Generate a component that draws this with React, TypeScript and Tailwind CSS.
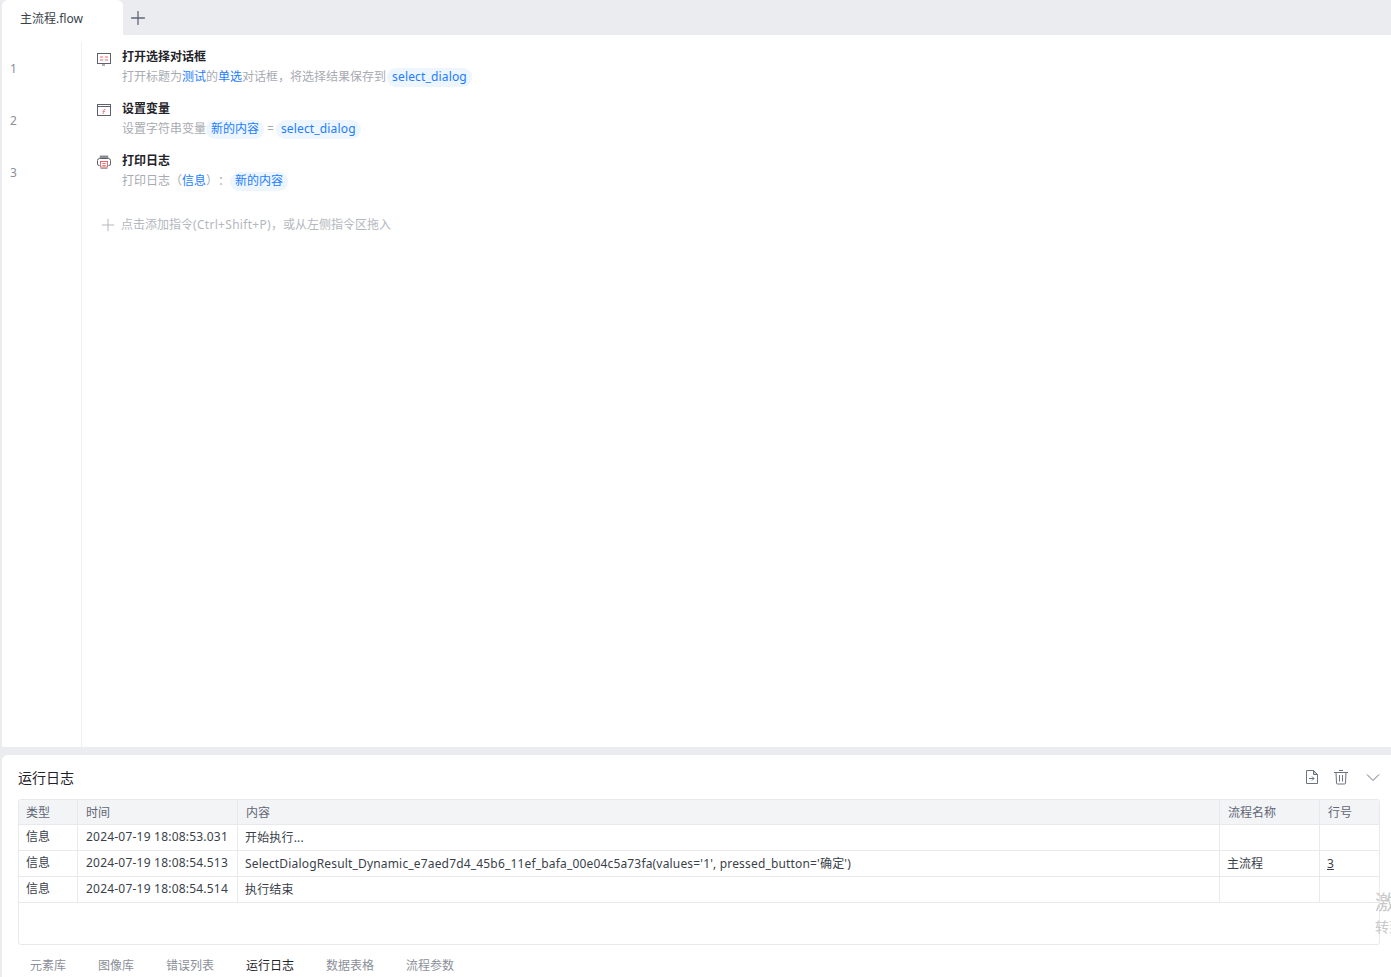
import { Plus } from "lucide-react";

const font = "font-['Noto_Sans','Noto_Sans_CJK_SC',sans-serif]";

function Pill({ children, latin }: { children: string; latin?: boolean }) {
  return (
    <span
      className={`inline-flex h-[19px] items-center rounded-full bg-[#edf5ff] px-[5px] text-[#1a7dff] ${
        latin ? "tracking-[0.16px]" : ""
      }`}
    >
      {children}
    </span>
  );
}

function Link({ children }: { children: string }) {
  return <span className="text-[#1a7dff]">{children}</span>;
}

function DialogIcon() {
  return (
    <svg width="16" height="16" viewBox="0 0 16 16" fill="none">
      <rect x="1.5" y="3.5" width="13" height="10" stroke="#5f636e" />
      <path d="M6 15h3" stroke="#5f636e" />
      <path d="M4 7h3M4 10h3M9 7h3M9 10h3" stroke="#f0686c" />
    </svg>
  );
}

function VarIcon() {
  return (
    <svg width="16" height="16" viewBox="0 0 16 16" fill="none">
      <rect x="1.5" y="2.5" width="13" height="11" stroke="#5f636e" />
      <path d="M1.5 4.500h13" stroke="#5f636e" />
      <path d="M9.500 7.500h-1.500l-1 4.500M6.500 9.500h2.500" stroke="#f58a8d" />
    </svg>
  );
}

function PrintIcon() {
  return (
    <svg width="16" height="16" viewBox="0 0 16 16" fill="none">
      <path d="M4 1.500h8l.5 2.500h-9z" fill="#8a8d96" />
      <path d="M3.500 11.500H3A1.500 1.500 0 0 1 1.500 10V6.500A2 2 0 0 1 3.500 4.500h9a2 2 0 0 1 2 2V10a1.500 1.500 0 0 1-1.500 1.500h-.5" stroke="#5f636e" />
      <rect x="4.500" y="7.500" width="7" height="5.500" stroke="#f0686c" />
      <path d="M6.500 9.500h3M6.500 11.500h3" stroke="#f0686c" />
      <path d="M4.500 13.500h7V15h-7z" fill="#a0a3ab" />
    </svg>
  );
}

function Step({
  icon,
  title,
  children,
}: {
  icon: React.ReactNode;
  title: string;
  children: React.ReactNode;
}) {
  return (
    <div className="flex h-[52px] items-start">
      <div className="pt-[10px] pl-[14px] w-[40px] shrink-0">{icon}</div>
      <div className="pt-[7px]">
        <div className="text-[12px] leading-[20px] font-bold text-[#1f2329]">{title}</div>
        <div className="flex items-center h-[20px] text-[12px] text-[#a8abb2] whitespace-nowrap">
          {children}
        </div>
      </div>
    </div>
  );
}

const rows = [
  { time: "2024-07-19 18:08:53.031", text: "开始执行...", flow: "", line: "" },
  {
    time: "2024-07-19 18:08:54.513",
    text: "SelectDialogResult_Dynamic_e7aed7d4_45b6_11ef_bafa_00e04c5a73fa(values='1', pressed_button='确定')",
    flow: "主流程",
    line: "3",
  },
  { time: "2024-07-19 18:08:54.514", text: "执行结束", flow: "", line: "" },
];

const tabs = ["元素库", "图像库", "错误列表", "运行日志", "数据表格", "流程参数"];

export default function App() {
  return (
    <div className={`${font} [text-spacing-trim:space-all] relative h-[977px] overflow-hidden bg-[#ebecf0] flex flex-col`}>
      {/* tab bar */}
      <div className="flex h-[35px] shrink-0 pl-[2px]">
        <div className="w-[121px] bg-white rounded-t-[6px] pl-[18px] text-[12px] leading-[37px] text-[#3a3f4a]">
          主流程.flow
        </div>
        <div className="pl-[4px] pt-[7px] text-[#5f6675]">
          <Plus size={22} strokeWidth={1.4} />
        </div>
      </div>

      {/* editor */}
      <div className="flex h-[712px] shrink-0 ml-[2px] bg-white">
        <div className="w-[80px] shrink-0 pt-[4px] border-r border-[#eef0f3] mt-[7px]">
          {["1", "2", "3"].map((n) => (
            <div key={n} className="h-[52px] pl-[8px] pt-[13px] text-[12px] leading-[20px] text-[#8b8f99]">
              {n}
            </div>
          ))}
        </div>
        <div className="flex-1 pt-[5px]">
          <Step icon={<DialogIcon />} title="打开选择对话框">
            打开标题为<Link>测试</Link>的<Link>单选</Link>对话框，将选择结果保存到
            <span className="ml-[1px]"><Pill latin>select_dialog</Pill></span>
          </Step>
          <Step icon={<VarIcon />} title="设置变量">
            设置字符串变量
            <Pill>新的内容</Pill>
            <span className="ml-[3px] mr-[2px]">=</span>
            <Pill latin>select_dialog</Pill>
          </Step>
          <Step icon={<PrintIcon />} title="打印日志">
            打印日志（<Link>信息</Link>）：
            <Pill>新的内容</Pill>
          </Step>
          <div className="flex items-center pl-[16px] mt-[19px] h-[20px] text-[12px] text-[#b4b7be]">
            <Plus size={20} strokeWidth={1.2} className="mr-[3px]" />
            <span>
              点击添加指令<span className="tracking-[0.3px]">(Ctrl+Shift+P)</span>，或从左侧指令区拖入
            </span>
          </div>
        </div>
      </div>

      {/* bottom panel */}
      <div className="mt-[8px] ml-[2px] flex-1 bg-white rounded-tl-[6px] px-[16px]">
        <div className="flex h-[44px] items-center justify-between">
          <span className="text-[14px] text-[#1f2329]">运行日志</span>
          <div className="flex items-center text-[#6b7280] -mr-[6px]">
            <svg width="16" height="16" viewBox="0 0 16 16" fill="none" stroke="currentColor">
              <path d="M2.500 1.500h7l4 4v9h-11z" />
              <path d="M9.500 1.500l4 4h-4z" fill="currentColor" fillOpacity="0.4" />
              <path d="M5 9.500h5M8 7.500l2 2-2 2" />
            </svg>
            <svg width="16" height="16" viewBox="0 0 16 16" fill="none" stroke="currentColor" className="ml-[13px]">
              <path d="M1 3.500h14M6 1.500h4M3 3.500l.5 10.500a1 1 0 0 0 1 1h7a1 1 0 0 0 1-1l.5-10.500M6.500 6v6.500M9.500 6v6.500" />
            </svg>
            <svg width="16" height="16" viewBox="0 0 16 16" fill="none" stroke="currentColor" className="ml-[16px]">
              <path d="M2 5.500l6 6 6-6" />
            </svg>
          </div>
        </div>

        <div className="w-[1362px] h-[146px] border border-[#e8e9ed] rounded-[3px] text-[12px] text-[#3a3f4a]">
          <div className="flex h-[25px] bg-[#f3f4f6] border-b border-[#e8e9ed] text-[#5f6675] rounded-t-[3px]">
            <div className="w-[59px] pl-[7px] leading-[26px] border-r border-[#e8e9ed]">类型</div>
            <div className="w-[160px] pl-[8px] leading-[26px] border-r border-[#e8e9ed]">时间</div>
            <div className="w-[982px] pl-[8px] leading-[26px] border-r border-[#e8e9ed]">内容</div>
            <div className="w-[100px] pl-[8px] leading-[26px] border-r border-[#e8e9ed]">流程名称</div>
            <div className="flex-1 pl-[8px] leading-[26px]">行号</div>
          </div>
          {rows.map((r) => (
            <div key={r.time} className="flex h-[26px] border-b border-[#e8e9ed]">
              <div className="w-[59px] pl-[7px] leading-[24px] border-r border-[#e8e9ed]">信息</div>
              <div className="w-[160px] pl-[8px] leading-[24px] tracking-[0.21px] border-r border-[#e8e9ed]">{r.time}</div>
              <div className="w-[982px] pl-[7px] leading-[26px] tracking-[0.17px] border-r border-[#e8e9ed] whitespace-nowrap">{r.text}</div>
              <div className="w-[100px] pl-[7px] leading-[26px] border-r border-[#e8e9ed]">{r.flow}</div>
              <div className="flex-1 pl-[7px] leading-[26px] underline">{r.line}</div>
            </div>
          ))}
        </div>

        <div className="flex pl-[12px] gap-[32px] mt-[11px] text-[12px] leading-[20px] text-[#8b8f99]">
          {tabs.map((t) => (
            <span key={t} className={t === "运行日志" ? "text-[#1f2329]" : ""}>
              {t}
            </span>
          ))}
        </div>
      </div>

      {/* system watermark, clipped at the right edge */}
      <div className="absolute left-[1375px] top-[889px] whitespace-nowrap text-[#c8c8c8]">
        <div className="text-[20px] leading-[28px]">激活 Windows</div>
        <div className="text-[14px] leading-[20px]">转到设置</div>
      </div>
    </div>
  );
}
